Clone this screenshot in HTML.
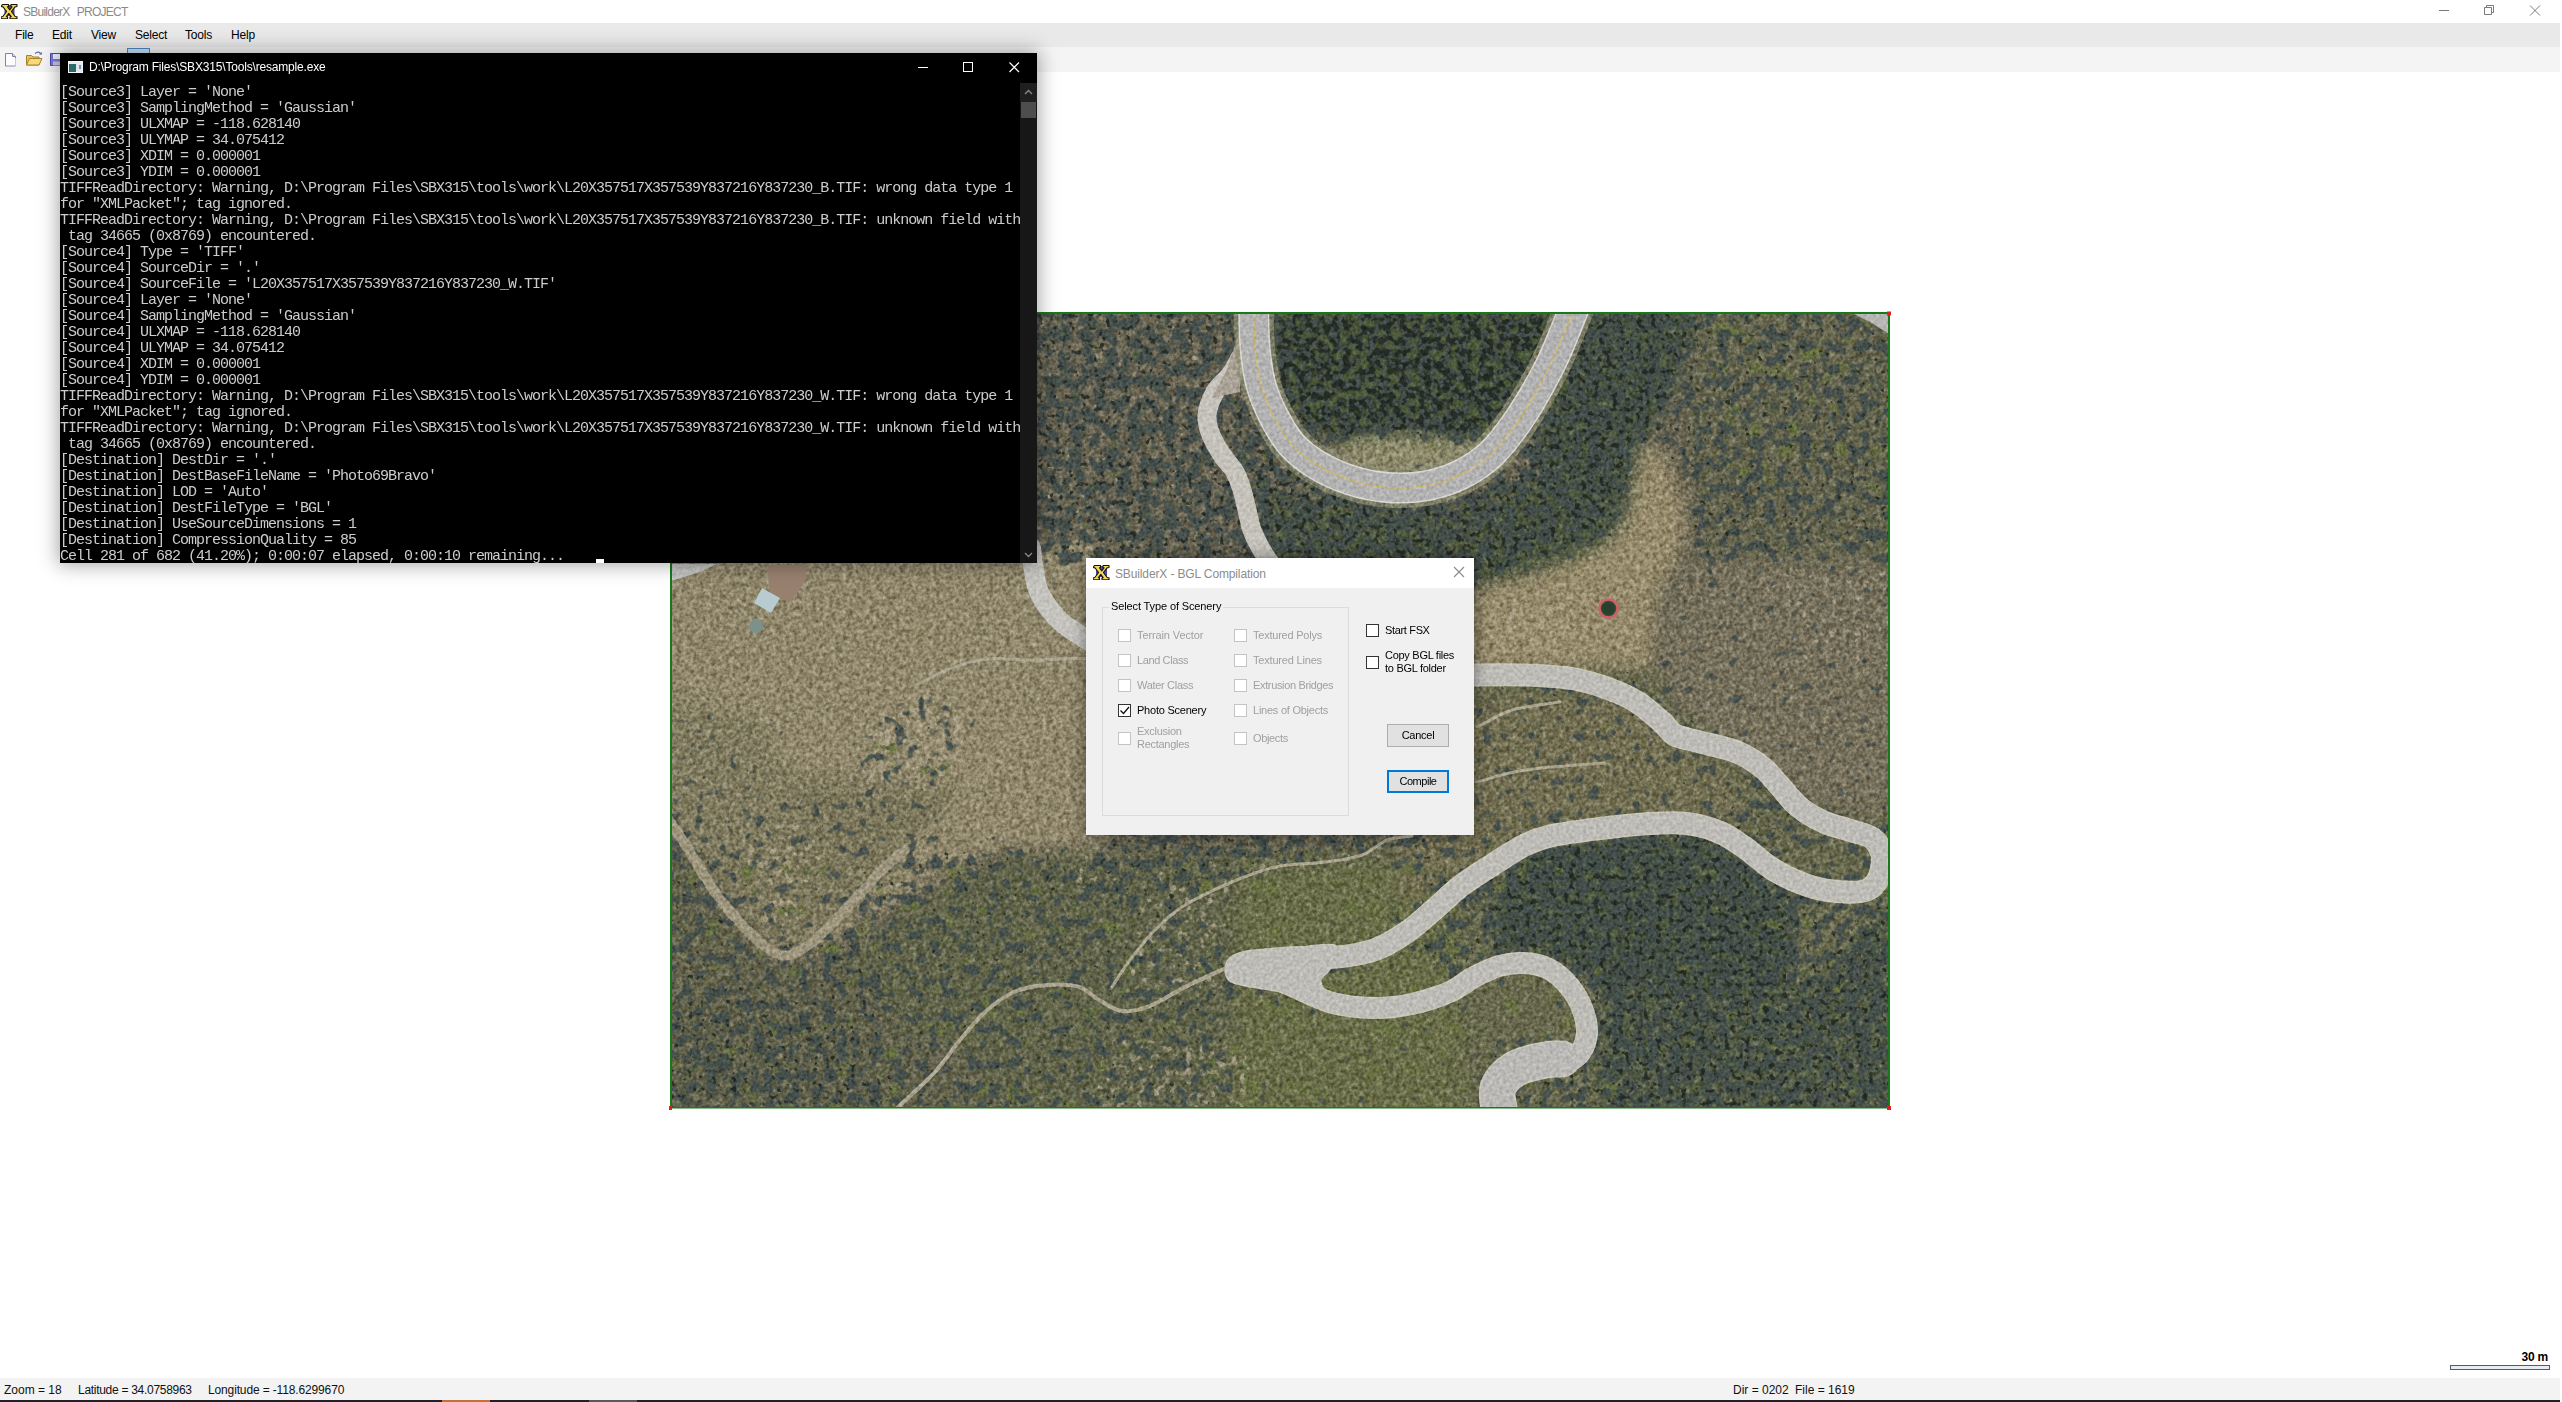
<!DOCTYPE html>
<html>
<head>
<meta charset="utf-8">
<title>SBuilderX PROJECT</title>
<style>
html,body{margin:0;padding:0;background:#fff;}
body{width:2562px;height:1402px;position:relative;overflow:hidden;font-family:"Liberation Sans",sans-serif;font-size:12px;color:#000;}
.abs{position:absolute;}
#titlebar{left:0;top:0;width:2560px;height:23px;background:#fff;}
#titletext{left:23px;top:4.5px;font-size:12px;color:#8a8a8a;white-space:pre;line-height:15px;letter-spacing:-0.75px;word-spacing:1px}
#menubar{left:0;top:23px;width:2560px;height:24px;background:#e9e9e9;}
.menu{top:28px;font-size:12px;line-height:15px;color:#000;letter-spacing:-0.2px}
#toolbar{left:0;top:47px;width:2560px;height:25px;background:#f4f4f4;}
#status{left:0;top:1378px;width:2560px;height:22px;background:#f3f3f3;}
.st{top:1383px;font-size:12px;line-height:15px;white-space:pre;color:#111;}
#taskstrip{left:0;top:1400px;width:2560px;height:2px;background:#231f28;}
#console{left:60px;top:53px;width:977px;height:510px;background:#000;box-shadow:0 0 18px 2px rgba(0,0,0,.35);}
#contitle{left:89px;top:60px;color:#fff;font-size:12px;line-height:15px;white-space:pre;letter-spacing:-0.18px}
#context{left:60px;top:85px;width:960px;margin:0;color:#ccc;font-family:"Liberation Mono",monospace;font-size:15px;letter-spacing:-1px;line-height:16px;white-space:pre;}
#scroll{left:1020px;top:83px;width:17px;height:480px;background:#171717;}
#thumb{left:1021px;top:102px;width:15px;height:16px;background:#4d4d4d;}
#dialog{left:1086px;top:558px;width:388px;height:277px;background:#f0f0f0;box-shadow:0 0 14px 1px rgba(0,0,0,.4);}
#dtitle{left:0;top:0;width:388px;height:30px;background:#fff;}
.dl{font-size:11px;line-height:13px;white-space:pre;color:#000;letter-spacing:-0.28px}
.dis{color:#a0a0a0;}
.cb{width:11px;height:11px;border:1px solid #333;background:#fff;}
.cbd{width:11px;height:11px;border:1px solid #c4c4c4;background:#fff;}
.btn{width:60px;height:21px;border:1px solid #adadad;background:#e1e1e1;font-size:11px;line-height:21px;text-align:center;}
</style>
</head>
<body>
<!-- main window chrome -->
<div id="titlebar" class="abs"></div>
<div id="titletext" class="abs">SBuilderX  PROJECT</div>
<div id="menubar" class="abs"></div>
<div class="abs menu" style="left:15px">File</div>
<div class="abs menu" style="left:52px">Edit</div>
<div class="abs menu" style="left:91px">View</div>
<div class="abs menu" style="left:135px">Select</div>
<div class="abs menu" style="left:185px">Tools</div>
<div class="abs menu" style="left:231px">Help</div>
<div id="toolbar" class="abs"></div>

<!-- app icon -->
<svg class="abs" style="left:1px;top:3px" width="18" height="16" viewBox="0 0 18 16">
<rect x="3.500" y="2" width="10" height="11" fill="#4848a8"/>
<path d="M1.500 1.500h6v2l-1 .3 2.300 3 2.200-3-1-.3v-2h6v2l-2 .4-3.600 4.600 3.800 5 1.800.4v2h-7v-2l1.200-.3-2.400-3.200-2.400 3.200 1.200.3v2h-6.600v-2l1.800-.4 3.800-5-3.600-4.600-2-.4z" fill="#f4d958" stroke="#1a1408" stroke-width="1.100" stroke-linejoin="round"/>
</svg>
<!-- window controls -->
<svg class="abs" style="left:2430px;top:0" width="120" height="22" viewBox="2430 0 120 22" fill="none" stroke="#7a7a7a" stroke-width="1">
<path d="M2439 10.500h10"/>
<path d="M2484.500 7.500h7v7h-7zM2486.500 7.500v-2h7v7h-2"/>
<path d="M2530 5.500l10 10M2540 5.500l-10 10"/>
</svg>
<!-- toolbar icons -->
<svg class="abs" style="left:0;top:47px" width="160" height="25" viewBox="0 47 160 25">
<rect x="127.500" y="48.500" width="22" height="22" fill="#cce4f7" stroke="#4a8ad0"/>
<path d="M5.500 53.500h7l3 3v9.500h-10z" fill="#fdfdff" stroke="#7c84a4" stroke-width="1"/>
<path d="M12.500 53.500v3h3" fill="#dfe3f0" stroke="#7c84a4" stroke-width="1"/>
<path d="M15.500 58v8h-9" fill="none" stroke="#c4cadf" stroke-width="1"/>
<path d="M26.500 55.500h5l1.500 1.500h6v8h-12.500z" fill="#e8c35c" stroke="#a8822c" stroke-width="1"/>
<path d="M26.500 65l3-6.500h12.500l-3 6.500z" fill="#f6da7c" stroke="#a8822c" stroke-width="1"/>
<path d="M35 53.500q3.500-3 6 .5l.8-1.500M41.800 54l-2.300.2" fill="none" stroke="#5a6c9c" stroke-width="1.100"/>
<path d="M50.500 53.500h10v12h-10z" fill="#7a7ae0" stroke="#4a4aa0" stroke-width="1"/>
<rect x="53" y="54" width="7" height="5" fill="#eef"/>
<rect x="53" y="61.500" width="7" height="4" fill="#c8c8e8"/>
</svg>

<!-- PHOTO -->
<svg id="photo" class="abs" style="left:669px;top:311px" width="1223" height="799" viewBox="669 311 1223 799">
<defs>
<clipPath id="pc"><rect x="672" y="314" width="1216" height="792.5"/></clipPath>
<filter id="fg" filterUnits="userSpaceOnUse" x="640" y="290" width="1280" height="850" color-interpolation-filters="sRGB"><feGaussianBlur stdDeviation="8" result="b"/><feTurbulence type="fractalNoise" baseFrequency="0.17" numOctaves="2" seed="4" result="t"/><feColorMatrix in="t" type="matrix" values="1 0 0 0 0  1 0 0 0 0  1 0 0 0 0  0 0 0 0 1" result="g"/><feComposite in="b" in2="g" operator="arithmetic" k1="0" k2="1" k3="0.30" k4="-0.15"/></filter>
<filter id="fgreen" filterUnits="userSpaceOnUse" x="640" y="290" width="1280" height="850" color-interpolation-filters="sRGB"><feGaussianBlur stdDeviation="14" result="d0"/><feColorMatrix in="d0" type="matrix" values="0 0 0 0 0  0 0 0 0 0  0 0 0 0 0  1 0 0 0 0" result="d"/><feTurbulence type="fractalNoise" baseFrequency="0.05" numOctaves="2" seed="11" result="t"/><feColorMatrix in="t" type="matrix" values="0 0 0 0 0  0 0 0 0 0  0 0 0 0 0  1 0 0 0 0" result="n"/><feComposite in="n" in2="d" operator="arithmetic" k1="0" k2="1" k3="1" k4="-1" result="m"/><feColorMatrix in="m" type="matrix" values="0 0 0 0 0.400  0 0 0 0 0.439  0 0 0 0 0.247  0 0 0 5 0"/></filter>
<filter id="frock" filterUnits="userSpaceOnUse" x="640" y="290" width="1280" height="850" color-interpolation-filters="sRGB"><feGaussianBlur stdDeviation="10" result="d0"/><feColorMatrix in="d0" type="matrix" values="0 0 0 0 0  0 0 0 0 0  0 0 0 0 0  1 0 0 0 0" result="d"/><feTurbulence type="fractalNoise" baseFrequency="0.13" numOctaves="2" seed="77" result="t"/><feColorMatrix in="t" type="matrix" values="0 0 0 0 0  0 0 0 0 0  0 0 0 0 0  1 0 0 0 0" result="n"/><feComposite in="n" in2="d" operator="arithmetic" k1="0" k2="1" k3="1" k4="-1" result="m"/><feColorMatrix in="m" type="matrix" values="0 0 0 0 0.706  0 0 0 0 0.663  0 0 0 0 0.573  0 0 0 9 0"/></filter>
<filter id="fbush" filterUnits="userSpaceOnUse" x="640" y="290" width="1280" height="850" color-interpolation-filters="sRGB"><feGaussianBlur stdDeviation="10" result="d0"/><feColorMatrix in="d0" type="matrix" values="0 0 0 0 0  0 0 0 0 0  0 0 0 0 0  1 0 0 0 0" result="d"/><feTurbulence type="fractalNoise" baseFrequency="0.085" numOctaves="2" seed="5" result="t"/><feColorMatrix in="t" type="matrix" values="0 0 0 0 0  0 0 0 0 0  0 0 0 0 0  1 0 0 0 0" result="n"/><feComposite in="n" in2="d" operator="arithmetic" k1="0" k2="1" k3="1" k4="-1" result="m"/><feColorMatrix in="m" type="matrix" values="0 0 0 0 0.263  0 0 0 0 0.306  0 0 0 0 0.298  0 0 0 8 0"/></filter>
<filter id="fbush2" filterUnits="userSpaceOnUse" x="640" y="290" width="1280" height="850" color-interpolation-filters="sRGB"><feGaussianBlur stdDeviation="10" result="d0"/><feColorMatrix in="d0" type="matrix" values="0 0 0 0 0  0 0 0 0 0  0 0 0 0 0  1 0 0 0 0" result="d"/><feTurbulence type="fractalNoise" baseFrequency="0.16" numOctaves="2" seed="23" result="t"/><feColorMatrix in="t" type="matrix" values="0 0 0 0 0  0 0 0 0 0  0 0 0 0 0  1 0 0 0 0" result="n"/><feComposite in="n" in2="d" operator="arithmetic" k1="0" k2="1" k3="1" k4="-1" result="m"/><feColorMatrix in="m" type="matrix" values="0 0 0 0 0.114  0 0 0 0 0.141  0 0 0 0 0.118  0 0 0 8 0"/></filter>
<filter id="fbush3" filterUnits="userSpaceOnUse" x="640" y="290" width="1280" height="850" color-interpolation-filters="sRGB"><feGaussianBlur stdDeviation="10" result="d0"/><feColorMatrix in="d0" type="matrix" values="0 0 0 0 0  0 0 0 0 0  0 0 0 0 0  1 0 0 0 0" result="d"/><feTurbulence type="fractalNoise" baseFrequency="0.1" numOctaves="2" seed="41" result="t"/><feColorMatrix in="t" type="matrix" values="0 0 0 0 0  0 0 0 0 0  0 0 0 0 0  1 0 0 0 0" result="n"/><feComposite in="n" in2="d" operator="arithmetic" k1="0" k2="1" k3="1" k4="-1" result="m"/><feColorMatrix in="m" type="matrix" values="0 0 0 0 0.333  0 0 0 0 0.384  0 0 0 0 0.235  0 0 0 7 0"/></filter>
<filter id="fgrain" filterUnits="userSpaceOnUse" x="660" y="300" width="1240" height="820" color-interpolation-filters="sRGB"><feTurbulence type="fractalNoise" baseFrequency="0.3" numOctaves="2" seed="9"/><feColorMatrix type="matrix" values="0.8 0 0 0 0.1  0.8 0 0 0 0.1  0.8 0 0 0 0.1  0 0 0 0 1"/></filter>
<filter id="froad" color-interpolation-filters="sRGB"><feGaussianBlur stdDeviation="0.6"/></filter>
</defs>
<rect x="670" y="312" width="1220" height="796.5" fill="#167a1a"/>
<g clip-path="url(#pc)">
<g filter="url(#fg)"><rect x="640" y="290" width="1280" height="850" fill="#6b6654"/>
<path d="M650 540L1105 540L1105 848L1010 848L950 868L890 905L830 945L785 955L750 930L720 890L690 845L650 800Z" fill="#8f866b"/>
<path d="M690 800L800 775L900 785L965 790L905 860L830 932L785 950L745 927L700 862Z" fill="#7c775c"/>
<path d="M650 700L760 720L800 800L760 860L700 850L650 800Z" fill="#807b60"/>
<path d="M830 962L900 915L960 875L1010 855L1086 855L1480 840L1480 1125L830 1125Z" fill="#63654b"/>
<path d="M1240 870L1420 860L1600 840L1610 1125L1230 1125Z" fill="#696d49"/>
<path d="M650 830L690 860L720 905L750 945L790 970L835 962L870 985L915 1035L990 1060L1010 1125L650 1125Z" fill="#64634d"/>
<path d="M1460 670L1900 670L1900 1125L1460 1125Z" fill="#68694e"/>
<path d="M1700 555L1900 560L1900 820L1800 800L1720 740L1668 700L1660 630L1675 585Z" fill="#76705c"/>
<path d="M1690 300L1900 300L1900 560L1700 560L1690 450Z" fill="#67664f"/>
<path d="M1272 300L1560 300L1540 360L1500 420L1460 455L1400 440L1340 440L1300 420L1278 380Z" fill="#3e4936"/>
<path d="M1335 440L1400 432L1470 440L1490 450L1460 470L1400 475L1350 468Z" fill="#8c8a6b"/>
<path d="M1260 500L1330 500L1400 510L1480 505L1550 470L1600 500L1620 540L1560 565L1480 585L1300 585L1270 560Z" fill="#4f5840"/>
<path d="M1560 300L1700 300L1680 380L1645 440L1630 520L1600 545L1540 470L1530 420Z" fill="#4b5542"/>
<path d="M1530 850L1620 838L1700 835L1750 860L1790 900L1790 1000L1700 1010L1600 985L1540 950L1500 960L1490 900Z" fill="#4a5443"/>
<path d="M1600 985L1790 1000L1900 900L1900 1125L1600 1125Z" fill="#555c47"/>
<path d="M1649 440L1661 450L1671 472L1683 505L1686 530L1676 560L1661 585L1653 622L1652 668L1470 668L1470 592L1520 577L1560 565L1590 552L1615 535L1627 515L1632 485L1640 450Z" fill="#958a6b"/>
<path d="M1400 700L1640 700L1660 740L1720 770L1760 820L1700 815L1640 812L1540 825L1480 860L1400 905Z" fill="#736f53"/>
</g>
<g filter="url(#fgreen)"><rect x="640" y="290" width="1280" height="850" fill="#000"/>
<path d="M650 300L1900 300L1900 1125L650 1125Z" fill="#333333"/>
<path d="M650 540L1105 540L1105 800L1000 800L900 860L800 930L650 800Z" fill="#0f0f0f"/>
<path d="M1272 300L1560 300L1540 360L1500 420L1460 455L1300 420Z" fill="#5c5c5c"/>
<path d="M1690 300L1900 300L1900 500L1700 500Z" fill="#696969"/>
<path d="M1649 440L1686 530L1653 622L1652 668L1470 668L1470 592L1615 535Z" fill="#0f0f0f"/>
<path d="M860 690L975 690L968 800L858 800Z" fill="#616161"/>
<path d="M650 850L1480 850L1480 1125L650 1125Z" fill="#616161"/>
<path d="M1480 850L1900 850L1900 1125L1480 1125Z" fill="#616161"/>
</g>
<g fill="none" stroke-linecap="round" stroke-linejoin="round" filter="url(#froad)">
<path d="M664 812C668.3 818.7 681.2 838.2 690 852C698.8 865.8 707.5 882 717 895C726.5 908 738.2 920.8 747 930C755.8 939.2 762.8 945.8 770 950C777.2 954.2 782.5 956.7 790 955C797.5 953.3 805.8 947.5 815 940C824.2 932.5 834.2 921.3 845 910C855.8 898.7 870 882 880 872C890 862 900.8 853.7 905 850" stroke="#958d74" stroke-width="11"/>
<path d="M880 872C885 867.8 900 855.7 910 847C920 838.3 930.8 829.5 940 820C949.2 810.5 955.5 800.8 965 790C974.5 779.2 985.5 765 997 755C1008.5 745 1018.5 738.2 1034 730C1049.5 721.8 1080.7 710 1090 706" stroke="#9d9479" stroke-width="2" opacity="0.7" transform="translate(-2.5,-2)"/>
<path d="M880 872C885 867.8 900 855.7 910 847C920 838.3 930.8 829.5 940 820C949.2 810.5 955.5 800.8 965 790C974.5 779.2 985.5 765 997 755C1008.5 745 1018.5 738.2 1034 730C1049.5 721.8 1080.7 710 1090 706" stroke="#9d9479" stroke-width="2" opacity="0.7" transform="translate(2.5,2)"/>
</g>
<g filter="url(#frock)" opacity="0.7"><rect x="640" y="290" width="1280" height="850" fill="#000"/>
<path d="M650 300L1900 300L1900 1125L650 1125Z" fill="#1f1f1f"/>
<path d="M1030 300L1240 300L1240 570L1030 570Z" fill="#4c4c4c"/>
<path d="M885 695L947 688L975 730L968 770L935 795L858 795L850 755Z" fill="#757575"/>
<path d="M730 850L800 800L830 850L800 935L760 930Z" fill="#707070"/>
<path d="M1090 1030L1260 1040L1260 1125L1090 1125Z" fill="#6b6b6b"/>
<path d="M1480 600L1570 590L1590 650L1500 660Z" fill="#707070"/>
<path d="M1130 900L1230 880L1230 990L1120 1010Z" fill="#666666"/>
<path d="M1760 560L1900 560L1900 700L1800 680Z" fill="#5c5c5c"/>
<path d="M1050 850L1400 850L1400 880L1050 900Z" fill="#575757"/>
</g>
<g filter="url(#fbush)" opacity="0.93"><rect x="640" y="290" width="1280" height="850" fill="#808080"/>
<path d="M650 540L1105 540L1105 850L650 830Z" fill="#333333"/>
<path d="M1030 300L1240 300L1235 370L1205 410L1240 480L1262 570L1030 570Z" fill="#8f8f8f"/>
<path d="M1225 385L1262 400L1290 450L1330 480L1420 500L1500 480L1550 440L1640 440L1630 520L1590 552L1520 577L1470 592L1280 592L1255 520L1240 470Z" fill="#999999"/>
<path d="M1272 300L1560 300L1540 360L1500 420L1460 455L1400 440L1340 440L1300 420L1278 380Z" fill="#bdbdbd"/>
<path d="M1335 440L1400 434L1470 442L1490 452L1460 470L1400 475L1350 468Z" fill="#2e2e2e"/>
<path d="M1560 300L1700 300L1680 380L1645 440L1630 520L1600 545L1540 470L1530 420Z" fill="#9e9e9e"/>
<path d="M1690 300L1900 300L1900 560L1690 560L1672 470L1655 440Z" fill="#808080"/>
<path d="M1660 560L1900 560L1900 830L1800 800L1720 745L1660 700Z" fill="#575757"/>
<path d="M1649 440L1661 450L1671 472L1683 505L1686 530L1676 560L1661 585L1653 622L1652 668L1470 668L1470 592L1520 577L1560 565L1590 552L1615 535L1627 515L1632 485L1640 450Z" fill="#0a0a0a"/>
<path d="M885 695L947 688L975 730L968 770L935 795L858 795L850 755Z" fill="#6b6b6b"/>
<path d="M650 690L740 720L770 790L730 840L650 830Z" fill="#5c5c5c"/>
<path d="M700 830L800 790L900 800L960 800L900 860L830 930L785 948L745 925Z" fill="#666666"/>
<path d="M880 915L960 870L1010 850L1086 850L1250 840L1250 1125L880 1125Z" fill="#757575"/>
<path d="M650 825L690 862L720 907L750 947L790 972L835 962L870 985L915 1035L990 1060L1010 1125L650 1125Z" fill="#787878"/>
<path d="M650 990L760 1000L860 1030L900 1125L650 1125Z" fill="#878787"/>
<path d="M1086 835L1480 835L1440 880L1380 930L1300 945L1230 950L1180 905L1086 900Z" fill="#808080"/>
<path d="M1230 880L1300 865L1380 860L1420 880L1380 935L1300 948L1240 950L1200 920Z" fill="#383838"/>
<path d="M1322 975L1400 960L1450 975L1400 996L1350 997Z" fill="#383838"/>
<path d="M1230 990L1320 1010L1420 1015L1480 1000L1480 1125L1230 1125Z" fill="#4c4c4c"/>
<path d="M1470 690L1640 690L1670 745L1750 775L1760 815L1650 810L1540 825L1480 860L1440 880L1440 760Z" fill="#666666"/>
<path d="M1530 850L1620 838L1700 835L1750 860L1790 900L1790 1000L1700 1010L1600 985L1540 950L1500 960L1490 900Z" fill="#999999"/>
<path d="M1600 985L1790 1000L1900 900L1900 1125L1600 1125Z" fill="#949494"/>
<path d="M1480 975L1560 975L1575 1040L1480 1045Z" fill="#404040"/>
<path d="M1760 840L1870 850L1860 880L1800 878Z" fill="#595959"/>
</g>
<g filter="url(#fbush2)" opacity="0.8"><rect x="640" y="290" width="1280" height="850" fill="#545454"/>
<path d="M650 540L1105 540L1105 850L650 830Z" fill="#080808"/>
<path d="M1030 300L1240 300L1235 370L1205 410L1240 480L1262 570L1030 570Z" fill="#636363"/>
<path d="M1225 385L1262 400L1290 450L1330 480L1420 500L1500 480L1550 440L1640 440L1630 520L1590 552L1520 577L1470 592L1280 592L1255 520L1240 470Z" fill="#6e6e6e"/>
<path d="M1272 300L1560 300L1540 360L1500 420L1460 455L1400 440L1340 440L1300 420L1278 380Z" fill="#919191"/>
<path d="M1335 440L1400 434L1470 442L1490 452L1460 470L1400 475L1350 468Z" fill="#030303"/>
<path d="M1560 300L1700 300L1680 380L1645 440L1630 520L1600 545L1540 470L1530 420Z" fill="#737373"/>
<path d="M1690 300L1900 300L1900 560L1690 560L1672 470L1655 440Z" fill="#545454"/>
<path d="M1660 560L1900 560L1900 830L1800 800L1720 745L1660 700Z" fill="#2b2b2b"/>
<path d="M1649 440L1661 450L1671 472L1683 505L1686 530L1676 560L1661 585L1653 622L1652 668L1470 668L1470 592L1520 577L1560 565L1590 552L1615 535L1627 515L1632 485L1640 450Z" fill="#000000"/>
<path d="M885 695L947 688L975 730L968 770L935 795L858 795L850 755Z" fill="#404040"/>
<path d="M650 690L740 720L770 790L730 840L650 830Z" fill="#303030"/>
<path d="M700 830L800 790L900 800L960 800L900 860L830 930L785 948L745 925Z" fill="#3b3b3b"/>
<path d="M880 915L960 870L1010 850L1086 850L1250 840L1250 1125L880 1125Z" fill="#4a4a4a"/>
<path d="M650 825L690 862L720 907L750 947L790 972L835 962L870 985L915 1035L990 1060L1010 1125L650 1125Z" fill="#4c4c4c"/>
<path d="M650 990L760 1000L860 1030L900 1125L650 1125Z" fill="#5c5c5c"/>
<path d="M1086 835L1480 835L1440 880L1380 930L1300 945L1230 950L1180 905L1086 900Z" fill="#545454"/>
<path d="M1230 880L1300 865L1380 860L1420 880L1380 935L1300 948L1240 950L1200 920Z" fill="#0d0d0d"/>
<path d="M1322 975L1400 960L1450 975L1400 996L1350 997Z" fill="#0d0d0d"/>
<path d="M1230 990L1320 1010L1420 1015L1480 1000L1480 1125L1230 1125Z" fill="#212121"/>
<path d="M1470 690L1640 690L1670 745L1750 775L1760 815L1650 810L1540 825L1480 860L1440 880L1440 760Z" fill="#3b3b3b"/>
<path d="M1530 850L1620 838L1700 835L1750 860L1790 900L1790 1000L1700 1010L1600 985L1540 950L1500 960L1490 900Z" fill="#6e6e6e"/>
<path d="M1600 985L1790 1000L1900 900L1900 1125L1600 1125Z" fill="#696969"/>
<path d="M1480 975L1560 975L1575 1040L1480 1045Z" fill="#141414"/>
<path d="M1760 840L1870 850L1860 880L1800 878Z" fill="#2e2e2e"/>
</g>
<g filter="url(#fbush3)" opacity="0.75"><rect x="640" y="290" width="1280" height="850" fill="#424242"/>
<path d="M650 540L1105 540L1105 850L650 830Z" fill="#000000"/>
<path d="M1030 300L1240 300L1235 370L1205 410L1240 480L1262 570L1030 570Z" fill="#525252"/>
<path d="M1225 385L1262 400L1290 450L1330 480L1420 500L1500 480L1550 440L1640 440L1630 520L1590 552L1520 577L1470 592L1280 592L1255 520L1240 470Z" fill="#5c5c5c"/>
<path d="M1272 300L1560 300L1540 360L1500 420L1460 455L1400 440L1340 440L1300 420L1278 380Z" fill="#808080"/>
<path d="M1335 440L1400 434L1470 442L1490 452L1460 470L1400 475L1350 468Z" fill="#000000"/>
<path d="M1560 300L1700 300L1680 380L1645 440L1630 520L1600 545L1540 470L1530 420Z" fill="#616161"/>
<path d="M1690 300L1900 300L1900 560L1690 560L1672 470L1655 440Z" fill="#424242"/>
<path d="M1660 560L1900 560L1900 830L1800 800L1720 745L1660 700Z" fill="#1a1a1a"/>
<path d="M1649 440L1661 450L1671 472L1683 505L1686 530L1676 560L1661 585L1653 622L1652 668L1470 668L1470 592L1520 577L1560 565L1590 552L1615 535L1627 515L1632 485L1640 450Z" fill="#000000"/>
<path d="M885 695L947 688L975 730L968 770L935 795L858 795L850 755Z" fill="#2e2e2e"/>
<path d="M650 690L740 720L770 790L730 840L650 830Z" fill="#1f1f1f"/>
<path d="M700 830L800 790L900 800L960 800L900 860L830 930L785 948L745 925Z" fill="#292929"/>
<path d="M880 915L960 870L1010 850L1086 850L1250 840L1250 1125L880 1125Z" fill="#383838"/>
<path d="M650 825L690 862L720 907L750 947L790 972L835 962L870 985L915 1035L990 1060L1010 1125L650 1125Z" fill="#3b3b3b"/>
<path d="M650 990L760 1000L860 1030L900 1125L650 1125Z" fill="#4a4a4a"/>
<path d="M1086 835L1480 835L1440 880L1380 930L1300 945L1230 950L1180 905L1086 900Z" fill="#424242"/>
<path d="M1230 880L1300 865L1380 860L1420 880L1380 935L1300 948L1240 950L1200 920Z" fill="#000000"/>
<path d="M1322 975L1400 960L1450 975L1400 996L1350 997Z" fill="#000000"/>
<path d="M1230 990L1320 1010L1420 1015L1480 1000L1480 1125L1230 1125Z" fill="#0f0f0f"/>
<path d="M1470 690L1640 690L1670 745L1750 775L1760 815L1650 810L1540 825L1480 860L1440 880L1440 760Z" fill="#292929"/>
<path d="M1530 850L1620 838L1700 835L1750 860L1790 900L1790 1000L1700 1010L1600 985L1540 950L1500 960L1490 900Z" fill="#5c5c5c"/>
<path d="M1600 985L1790 1000L1900 900L1900 1125L1600 1125Z" fill="#575757"/>
<path d="M1480 975L1560 975L1575 1040L1480 1045Z" fill="#030303"/>
<path d="M1760 840L1870 850L1860 880L1800 878Z" fill="#1c1c1c"/>
</g>
<path d="M664 812C668.3 818.7 681.2 838.2 690 852C698.8 865.8 707.5 882 717 895C726.5 908 738.2 920.8 747 930C755.8 939.2 762.8 945.8 770 950C777.2 954.2 782.5 956.7 790 955C797.5 953.3 805.8 947.5 815 940C824.2 932.5 834.2 921.3 845 910C855.8 898.7 870 882 880 872C890 862 900.8 853.7 905 850" fill="none" stroke="#9f977f" stroke-width="9.5" stroke-linecap="round" opacity="0.92" filter="url(#froad)"/>
<g fill="none" stroke-linecap="round" stroke-linejoin="round" filter="url(#froad)">
<path d="M917 685C922 682.5 935.8 674.3 947 670C958.2 665.7 969.5 660.7 984 659C998.5 657.3 1016.3 660.2 1034 660C1051.7 659.8 1080.7 658.3 1090 658" stroke="#aaa48e" stroke-width="3"/>
<path d="M1112 987C1115 982.5 1122.8 969.5 1130 960C1137.2 950.5 1146.3 938.8 1155 930C1163.7 921.2 1170.3 914.5 1182 907C1193.7 899.5 1209.5 891.7 1225 885C1240.5 878.3 1258.3 870.8 1275 867C1291.7 863.2 1310.5 864 1325 862C1339.5 860 1351.7 858.7 1362 855C1372.3 851.3 1378.7 843.2 1387 840C1395.3 836.8 1407.8 836.7 1412 836" stroke="#aaa48e" stroke-width="3"/>
<path d="M1477 727C1482.8 724.2 1498.2 714.2 1512 710C1525.8 705.8 1552 703.3 1560 702" stroke="#aaa48e" stroke-width="3"/>
<path d="M1477 782C1485 780 1503.7 773.2 1525 770C1546.3 766.8 1591.7 764.2 1605 763" stroke="#aaa48e" stroke-width="3"/>
<path d="M895 1110C901.7 1103.7 924.2 1083.7 935 1072C945.8 1060.3 951.7 1050 960 1040C968.3 1030 976 1020 985 1012C994 1004 1003.7 996.5 1014 992C1024.3 987.5 1036.2 985.8 1047 985C1057.8 984.2 1070.3 984.5 1079 987C1087.7 989.5 1091.8 996 1099 1000C1106.2 1004 1113.5 1010 1122 1011C1130.5 1012 1139.2 1010.2 1150 1006C1160.8 1001.8 1174.3 992.3 1187 986C1199.7 979.7 1219.5 971 1226 968" stroke="#aaa48e" stroke-width="4"/>
<path d="M1465 675C1475 675 1506.7 674.3 1525 675C1543.3 675.7 1560.5 676.5 1575 679C1589.5 681.5 1601.7 686.2 1612 690C1622.3 693.8 1628.7 696.7 1637 702C1645.3 707.3 1655.7 716.5 1662 722C1668.3 727.5 1668.7 731.7 1675 735C1681.3 738.3 1689.7 739.2 1700 742C1710.3 744.8 1726.7 747.8 1737 752C1747.3 756.2 1755 761.5 1762 767C1769 772.5 1772.8 778.3 1779 785C1785.2 791.7 1791.5 800.8 1799 807C1806.5 813.2 1815.7 818.2 1824 822C1832.3 825.8 1841 827.3 1849 830C1857 832.7 1866.5 833.8 1872 838C1877.5 842.2 1880.8 848.5 1882 855C1883.2 861.5 1881.5 871.2 1879 877C1876.5 882.8 1872.8 887.5 1867 890C1861.2 892.5 1853.2 892.5 1844 892C1834.8 891.5 1823.7 890.7 1812 887C1800.3 883.3 1785.3 876.7 1774 870C1762.7 863.3 1753.2 853.3 1744 847C1734.8 840.7 1728.5 835.9 1719 832C1709.5 828.1 1698.5 824.9 1687 823.5C1675.5 822.1 1664.5 822.7 1650 823.5C1635.5 824.3 1616.7 826.4 1600 828.5C1583.3 830.6 1562.5 833.2 1550 836C1537.5 838.8 1533.3 841 1525 845C1516.7 849 1510.5 853.3 1500 860C1489.5 866.7 1472.5 877.2 1462 885C1451.5 892.8 1446.2 899.2 1437 907C1427.8 914.8 1417.5 924.8 1407 932C1396.5 939.2 1385.7 945.8 1374 950C1362.3 954.2 1351.5 955.7 1337 957C1322.5 958.3 1302.3 957 1287 958C1271.7 959 1252 962.2 1245 963" stroke="#c9c5b6" stroke-width="23"/>
<path d="M1245 974C1250 974.8 1263.8 975.5 1275 979C1286.2 982.5 1301.7 990.8 1312 995C1322.3 999.2 1326.6 1001.8 1337 1004C1347.4 1006.2 1362.1 1008 1374.6 1008C1387.1 1008 1399.5 1006.7 1412 1004C1424.5 1001.3 1439.2 996.5 1449.5 992C1459.8 987.5 1465.8 981.3 1474 977C1482.2 972.7 1490.7 968.3 1499 966C1507.3 963.7 1515.7 962.5 1524 963C1532.3 963.5 1541.5 965.2 1549 969C1556.5 972.8 1563.5 979.5 1569 986C1574.5 992.5 1579 1000.3 1582 1008C1585 1015.7 1587.3 1024.5 1587 1032C1586.7 1039.5 1583.7 1047.7 1580 1053C1576.3 1058.3 1567.5 1062.2 1565 1064" stroke="#c9c5b6" stroke-width="22"/>
<path d="M1226 968C1226.3 964.2 1227.7 959.8 1232 957C1236.3 954.2 1242.3 952.3 1252 951C1261.7 949.7 1276.2 949.8 1290 949C1303.8 948.2 1328.3 942.8 1335 946C1341.7 949.2 1332.5 962.3 1330 968C1327.5 973.7 1320.8 974.7 1320 980C1319.2 985.3 1328.3 997.3 1325 1000C1321.7 1002.7 1308.3 997.7 1300 996C1291.7 994.3 1284.2 991.8 1275 990C1265.8 988.2 1252.5 986.7 1245 985C1237.5 983.3 1233.2 982.8 1230 980C1226.8 977.2 1225.7 971.8 1226 968Z" fill="#c9c5b6" stroke="#c9c5b6" stroke-width="3"/>
<path d="M1562 1059C1559.2 1059.2 1552.8 1058.3 1545 1060C1537.2 1061.7 1522.8 1064.3 1515 1069C1507.2 1073.7 1500.5 1080.5 1498 1088C1495.5 1095.5 1499.7 1109.7 1500 1114" stroke="#c9c5b6" stroke-width="37"/>
<path d="M1465 675C1475 675 1506.7 674.3 1525 675C1543.3 675.7 1560.5 676.5 1575 679C1589.5 681.5 1601.7 686.2 1612 690C1622.3 693.8 1628.7 696.7 1637 702C1645.3 707.3 1655.7 716.5 1662 722C1668.3 727.5 1668.7 731.7 1675 735C1681.3 738.3 1689.7 739.2 1700 742C1710.3 744.8 1726.7 747.8 1737 752C1747.3 756.2 1755 761.5 1762 767C1769 772.5 1772.8 778.3 1779 785C1785.2 791.7 1791.5 800.8 1799 807C1806.5 813.2 1815.7 818.2 1824 822C1832.3 825.8 1841 827.3 1849 830C1857 832.7 1866.5 833.8 1872 838C1877.5 842.2 1880.8 848.5 1882 855C1883.2 861.5 1881.5 871.2 1879 877C1876.5 882.8 1872.8 887.5 1867 890C1861.2 892.5 1853.2 892.5 1844 892C1834.8 891.5 1823.7 890.7 1812 887C1800.3 883.3 1785.3 876.7 1774 870C1762.7 863.3 1753.2 853.3 1744 847C1734.8 840.7 1728.5 835.9 1719 832C1709.5 828.1 1698.5 824.9 1687 823.5C1675.5 822.1 1664.5 822.7 1650 823.5C1635.5 824.3 1616.7 826.4 1600 828.5C1583.3 830.6 1562.5 833.2 1550 836C1537.5 838.8 1533.3 841 1525 845C1516.7 849 1510.5 853.3 1500 860C1489.5 866.7 1472.5 877.2 1462 885C1451.5 892.8 1446.2 899.2 1437 907C1427.8 914.8 1417.5 924.8 1407 932C1396.5 939.2 1385.7 945.8 1374 950C1362.3 954.2 1351.5 955.7 1337 957C1322.5 958.3 1302.3 957 1287 958C1271.7 959 1252 962.2 1245 963" stroke="#bdbcb7" stroke-width="20"/>
<path d="M1245 974C1250 974.8 1263.8 975.5 1275 979C1286.2 982.5 1301.7 990.8 1312 995C1322.3 999.2 1326.6 1001.8 1337 1004C1347.4 1006.2 1362.1 1008 1374.6 1008C1387.1 1008 1399.5 1006.7 1412 1004C1424.5 1001.3 1439.2 996.5 1449.5 992C1459.8 987.5 1465.8 981.3 1474 977C1482.2 972.7 1490.7 968.3 1499 966C1507.3 963.7 1515.7 962.5 1524 963C1532.3 963.5 1541.5 965.2 1549 969C1556.5 972.8 1563.5 979.5 1569 986C1574.5 992.5 1579 1000.3 1582 1008C1585 1015.7 1587.3 1024.5 1587 1032C1586.7 1039.5 1583.7 1047.7 1580 1053C1576.3 1058.3 1567.5 1062.2 1565 1064" stroke="#bdbcb7" stroke-width="19"/>
<path d="M1226 968C1226.3 964.2 1227.7 959.8 1232 957C1236.3 954.2 1242.3 952.3 1252 951C1261.7 949.7 1276.2 949.8 1290 949C1303.8 948.2 1328.3 942.8 1335 946C1341.7 949.2 1332.5 962.3 1330 968C1327.5 973.7 1320.8 974.7 1320 980C1319.2 985.3 1328.3 997.3 1325 1000C1321.7 1002.7 1308.3 997.7 1300 996C1291.7 994.3 1284.2 991.8 1275 990C1265.8 988.2 1252.5 986.7 1245 985C1237.5 983.3 1233.2 982.8 1230 980C1226.8 977.2 1225.7 971.8 1226 968Z" fill="#bdbcb7"/>
<path d="M1562 1059C1559.2 1059.2 1552.8 1058.3 1545 1060C1537.2 1061.7 1522.8 1064.3 1515 1069C1507.2 1073.7 1500.5 1080.5 1498 1088C1495.5 1095.5 1499.7 1109.7 1500 1114" stroke="#bab9b6" stroke-width="34"/>
<path d="M1240 358C1238.3 360.8 1234.2 369.3 1230 375C1225.8 380.7 1218.8 385.3 1215 392C1211.2 398.7 1207.7 407.8 1207 415C1206.3 422.2 1208.5 428.3 1211 435C1213.5 441.7 1218 448.8 1222 455C1226 461.2 1231.7 466.2 1235 472C1238.3 477.8 1240 483.7 1242 490C1244 496.3 1245.3 503.3 1247 510C1248.7 516.7 1249.8 523.8 1252 530C1254.2 536.2 1256.7 541 1260 547C1263.3 553 1270 562.8 1272 566" stroke="#c4c2ba" stroke-width="19"/>
<path d="M1031 548C1031.3 550.8 1031.7 557.7 1033 565C1034.3 572.3 1035.2 583.3 1039 592C1042.8 600.7 1050.5 610.7 1056 617C1061.5 623.3 1065.2 625.2 1072 630C1078.8 634.8 1092.8 643.3 1097 646" stroke="#c4c3be" stroke-width="20"/>
<path d="M1240 330L1226 372L1212 398L1240 392Z" fill="#aaa297"/>
<path d="M1253.5 306C1253.8 312.8 1253.8 333.8 1255 347C1256.2 360.2 1257.8 373.3 1261 385C1264.2 396.7 1268.8 407 1274 417C1279.2 427 1284.8 437 1292 445C1299.2 453 1307.3 459.2 1317 465C1326.7 470.8 1338.3 476.2 1350 480C1361.7 483.8 1374.5 486.5 1387 487.5C1399.5 488.5 1412.8 488.1 1425 486C1437.2 483.9 1449.2 480.2 1460 475C1470.8 469.8 1480.8 463.3 1490 455C1499.2 446.7 1507.2 435.8 1515 425C1522.8 414.2 1530.3 401.7 1537 390C1543.7 378.3 1548.7 369 1555 355C1561.3 341 1571.7 314.2 1575 306" stroke="#8f8d72" stroke-width="40" opacity="0.75"/>
<path d="M1253.5 306C1253.8 312.8 1253.8 333.8 1255 347C1256.2 360.2 1257.8 373.3 1261 385C1264.2 396.7 1268.8 407 1274 417C1279.2 427 1284.8 437 1292 445C1299.2 453 1307.3 459.2 1317 465C1326.7 470.8 1338.3 476.2 1350 480C1361.7 483.8 1374.5 486.5 1387 487.5C1399.5 488.5 1412.8 488.1 1425 486C1437.2 483.9 1449.2 480.2 1460 475C1470.8 469.8 1480.8 463.3 1490 455C1499.2 446.7 1507.2 435.8 1515 425C1522.8 414.2 1530.3 401.7 1537 390C1543.7 378.3 1548.7 369 1555 355C1561.3 341 1571.7 314.2 1575 306" stroke="#d8d8d4" stroke-width="31"/>
<path d="M1253.5 306C1253.8 312.8 1253.8 333.8 1255 347C1256.2 360.2 1257.8 373.3 1261 385C1264.2 396.7 1268.8 407 1274 417C1279.2 427 1284.8 437 1292 445C1299.2 453 1307.3 459.2 1317 465C1326.7 470.8 1338.3 476.2 1350 480C1361.7 483.8 1374.5 486.5 1387 487.5C1399.5 488.5 1412.8 488.1 1425 486C1437.2 483.9 1449.2 480.2 1460 475C1470.8 469.8 1480.8 463.3 1490 455C1499.2 446.7 1507.2 435.8 1515 425C1522.8 414.2 1530.3 401.7 1537 390C1543.7 378.3 1548.7 369 1555 355C1561.3 341 1571.7 314.2 1575 306" stroke="#b2b2b2" stroke-width="28"/>
<path d="M1253.5 306C1253.8 312.8 1253.8 333.8 1255 347C1256.2 360.2 1257.8 373.3 1261 385C1264.2 396.7 1268.8 407 1274 417C1279.2 427 1284.8 437 1292 445C1299.2 453 1307.3 459.2 1317 465C1326.7 470.8 1338.3 476.2 1350 480C1361.7 483.8 1374.5 486.5 1387 487.5C1399.5 488.5 1412.8 488.1 1425 486C1437.2 483.9 1449.2 480.2 1460 475C1470.8 469.8 1480.8 463.3 1490 455C1499.2 446.7 1507.2 435.8 1515 425C1522.8 414.2 1530.3 401.7 1537 390C1543.7 378.3 1548.7 369 1555 355C1561.3 341 1571.7 314.2 1575 306" stroke="#c9b776" stroke-width="1.6"/>
<path d="M671 564L717 564L700 572L671 581Z" fill="#c2c2c0"/>
<path d="M1852 313L1889 313L1889 334L1870 322Z" fill="#b5b5b3"/>
</g>
<rect x="660" y="300" width="1240" height="820" filter="url(#fgrain)" style="mix-blend-mode:overlay" opacity="0.55"/>
<g>
<path d="M767 565L806 565L806 580L790 602L770 596Z" fill="#98806f"/>
<path d="M762 588L780 598L771 613L754 603Z" fill="#b7cbd0"/>
<circle cx="756" cy="626" r="7" fill="#7c918a"/>
<circle cx="1608.500" cy="608.500" r="9" fill="#3a4a38" stroke="#d06068" stroke-width="2.500"/>
<circle cx="1608.500" cy="608.500" r="6.200" fill="#27402c"/>
</g>
</g>
<rect x="1887" y="311.5" width="4" height="4" fill="#e02020"/>
<rect x="668" y="1106" width="4" height="4" fill="#e02020"/>
<rect x="1887" y="1106" width="4" height="4" fill="#e02020"/>
</svg>

<!-- scale bar -->
<div class="abs" style="left:2450px;top:1365px;width:98px;height:3px;border:1px solid #555c66;background:#e6edf5"></div>
<div class="abs" style="left:2500px;top:1350px;width:48px;text-align:right;font-size:12px;line-height:14px;font-weight:bold;color:#000;white-space:pre;letter-spacing:-0.2px">30 m</div>
<!-- status bar -->
<div id="status" class="abs"></div>
<div class="abs st" style="left:4px">Zoom = 18</div>
<div class="abs st" style="left:78px;letter-spacing:-0.29px">Latitude = 34.0758963</div>
<div class="abs st" style="left:208px;letter-spacing:-0.14px">Longitude = -118.6299670</div>
<div class="abs st" style="left:1733px">Dir = 0202</div>
<div class="abs st" style="left:1795px">File = 1619</div>
<div id="taskstrip" class="abs"></div>
<div class="abs" style="left:442px;top:1400px;width:48px;height:2px;background:#c8703a"></div>
<div class="abs" style="left:589px;top:1400px;width:48px;height:2px;background:#5a5760"></div>

<!-- console -->
<div id="console" class="abs"></div>
<div id="contitle" class="abs">D:\Program Files\SBX315\Tools\resample.exe</div>
<pre id="context" class="abs">[Source3] Layer = 'None'
[Source3] SamplingMethod = 'Gaussian'
[Source3] ULXMAP = -118.628140
[Source3] ULYMAP = 34.075412
[Source3] XDIM = 0.000001
[Source3] YDIM = 0.000001
TIFFReadDirectory: Warning, D:\Program Files\SBX315\tools\work\L20X357517X357539Y837216Y837230_B.TIF: wrong data type 1
for "XMLPacket"; tag ignored.
TIFFReadDirectory: Warning, D:\Program Files\SBX315\tools\work\L20X357517X357539Y837216Y837230_B.TIF: unknown field with
 tag 34665 (0x8769) encountered.
[Source4] Type = 'TIFF'
[Source4] SourceDir = '.'
[Source4] SourceFile = 'L20X357517X357539Y837216Y837230_W.TIF'
[Source4] Layer = 'None'
[Source4] SamplingMethod = 'Gaussian'
[Source4] ULXMAP = -118.628140
[Source4] ULYMAP = 34.075412
[Source4] XDIM = 0.000001
[Source4] YDIM = 0.000001
TIFFReadDirectory: Warning, D:\Program Files\SBX315\tools\work\L20X357517X357539Y837216Y837230_W.TIF: wrong data type 1
for "XMLPacket"; tag ignored.
TIFFReadDirectory: Warning, D:\Program Files\SBX315\tools\work\L20X357517X357539Y837216Y837230_W.TIF: unknown field with
 tag 34665 (0x8769) encountered.
[Destination] DestDir = '.'
[Destination] DestBaseFileName = 'Photo69Bravo'
[Destination] LOD = 'Auto'
[Destination] DestFileType = 'BGL'
[Destination] UseSourceDimensions = 1
[Destination] CompressionQuality = 85
Cell 281 of 682 (41.20%); 0:00:07 elapsed, 0:00:10 remaining...</pre>
<div id="scroll" class="abs"></div>
<div id="thumb" class="abs"></div>
<svg class="abs" style="left:60px;top:54px" width="977" height="29" viewBox="60 54 977 29">
<rect x="68.500" y="61.500" width="14" height="11" fill="#2a6a6a" stroke="#f4f4f4" stroke-width="1"/>
<rect x="69" y="62" width="13" height="2" fill="#e8eef0"/>
<rect x="76" y="64" width="6" height="8" fill="#dfe6ea"/>
<rect x="79" y="65" width="2" height="4" fill="#7a96a8"/>
<g fill="none" stroke="#fff" stroke-width="1"><path d="M918 67.500h10"/><rect x="963.500" y="62.500" width="9" height="9"/><path d="M1009.500 62.500l9.500 9.500M1019 62.500l-9.500 9.500" stroke-width="1.200"/></g>
</svg>
<svg class="abs" style="left:1020px;top:83px" width="17" height="480" viewBox="0 0 17 480" fill="none" stroke="#8a8a8a" stroke-width="1.300">
<rect x="0" y="0" width="17" height="19" fill="#1f1f1f" stroke="none"/>
<path d="M5 11l3.500-3.500 3.500 3.500"/><path d="M5 470l3.500 3.500 3.500-3.500"/></svg>
<div class="abs" style="left:596px;top:559px;width:8px;height:4px;background:#fff"></div>

<!-- dialog -->
<div id="dialog" class="abs"></div>
<div class="abs" style="left:1086px;top:558px;width:388px;height:30px;background:#fff"></div>
<svg class="abs" style="left:1093px;top:564px" width="18" height="16" viewBox="0 0 18 16">
<rect x="3" y="2" width="11" height="11" fill="#4a4aa8"/>
<path d="M1.5 1.5h6v2l-1 .3 2.3 3 2.2-3-1-.3v-2h6v2l-2 .4-3.6 4.6 3.8 5 1.8.4v2h-7v-2l1.2-.3-2.4-3.2-2.4 3.2 1.2.3v2h-6.600v-2l1.800-.4 3.800-5-3.600-4.600-2-.4z" fill="#f4d958" stroke="#1a1408" stroke-width="1.1" stroke-linejoin="round"/>
</svg>
<div class="abs" style="left:1115px;top:566.5px;font-size:12px;line-height:15px;color:#8c8c8c;white-space:pre;letter-spacing:-0.13px">SBuilderX - BGL Compilation</div>
<svg class="abs" style="left:1452px;top:565px" width="14" height="14" viewBox="0 0 14 14"><path d="M2 2l10 10M12 2L2 12" stroke="#8a8a8a" stroke-width="1.1" fill="none"/></svg>
<div class="abs" style="left:1102px;top:607px;width:245px;height:207px;border:1px solid #dcdcdc"></div>
<div class="abs dl" style="left:1109px;top:600px;padding:0 2px;background:#f0f0f0;letter-spacing:-0.12px;font-size:11px">Select Type of Scenery</div>
<div class="abs cbd" style="left:1118px;top:629px"></div>
<div class="abs dl dis" style="left:1137px;top:629px;letter-spacing:-0.11px">Terrain Vector</div>
<div class="abs cbd" style="left:1234px;top:629px"></div>
<div class="abs dl dis" style="left:1253px;top:629px;letter-spacing:-0.23px">Textured Polys</div>
<div class="abs cbd" style="left:1118px;top:654px"></div>
<div class="abs dl dis" style="left:1137px;top:654px;letter-spacing:-0.39px">Land Class</div>
<div class="abs cbd" style="left:1234px;top:654px"></div>
<div class="abs dl dis" style="left:1253px;top:654px;letter-spacing:-0.19px">Textured Lines</div>
<div class="abs cbd" style="left:1118px;top:679px"></div>
<div class="abs dl dis" style="left:1137px;top:679px;letter-spacing:-0.31px">Water Class</div>
<div class="abs cbd" style="left:1234px;top:679px"></div>
<div class="abs dl dis" style="left:1253px;top:679px;letter-spacing:-0.35px">Extrusion Bridges</div>
<div class="abs cb" style="left:1118px;top:704px"></div>
<svg class="abs" style="left:1118px;top:704px" width="13" height="13" viewBox="0 0 13 13"><path d="M2.5 6.500l3 3 5.500-6.500" stroke="#111" stroke-width="1.3" fill="none"/></svg>
<div class="abs dl" style="left:1137px;top:704px;letter-spacing:-0.23px">Photo Scenery</div>
<div class="abs cbd" style="left:1234px;top:704px"></div>
<div class="abs dl dis" style="left:1253px;top:704px;letter-spacing:-0.24px">Lines of Objects</div>
<div class="abs cbd" style="left:1118px;top:732px"></div>
<div class="abs dl dis" style="left:1137px;top:725px">Exclusion
Rectangles</div>
<div class="abs cbd" style="left:1234px;top:732px"></div>
<div class="abs dl dis" style="left:1253px;top:732px;letter-spacing:-0.36px">Objects</div>
<div class="abs cb" style="left:1366px;top:624px"></div>
<div class="abs dl" style="left:1385px;top:624px;letter-spacing:-0.34px">Start FSX</div>
<div class="abs cb" style="left:1366px;top:656px"></div>
<div class="abs dl" style="left:1385px;top:649px">Copy BGL files
to BGL folder</div>
<div class="abs btn" style="left:1387px;top:724px;letter-spacing:-0.27px">Cancel</div>
<div class="abs btn" style="left:1387px;top:770px;border:2px solid #0078d7;width:58px;height:19px;line-height:19px;letter-spacing:-0.48px">Compile</div>

</body>
</html>
